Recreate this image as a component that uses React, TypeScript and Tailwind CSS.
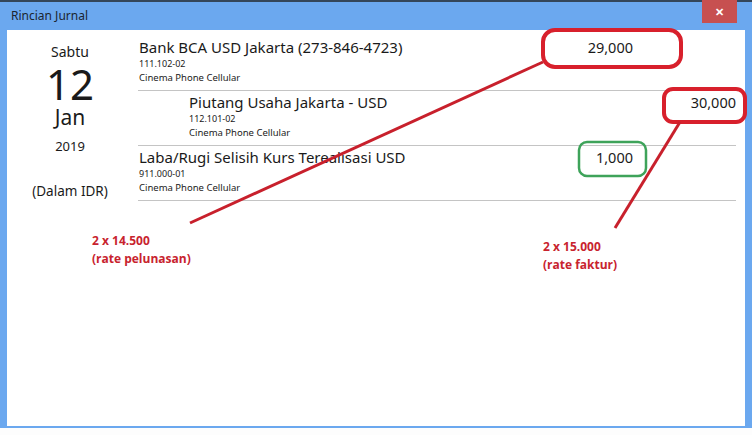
type Entry = {
  name: string;
  code: string;
  company: string;
  debit?: string;
  credit?: string;
  indent?: boolean;
};

const entries: Entry[] = [
  {
    name: 'Bank BCA USD Jakarta (273-846-4723)',
    code: '111.102-02',
    company: 'Cinema Phone Cellular',
    debit: '29,000',
  },
  {
    name: 'Piutang Usaha Jakarta - USD',
    code: '112.101-02',
    company: 'Cinema Phone Cellular',
    credit: '30,000',
    indent: true,
  },
  {
    name: 'Laba/Rugi Selisih Kurs Terealisasi USD',
    code: '911.000-01',
    company: 'Cinema Phone Cellular',
    debit: '1,000',
  },
];

const JournalRow = ({ entry }: { entry: Entry }) => (
  <div className="grid grid-cols-[1fr_100px_103px] border-b border-[#c4c4c4] pt-[1px] pb-[5px] text-[#1a1a1a]">
    <div className={entry.indent ? 'pl-[51px]' : 'pl-[1px]'}>
      <div className="h-[20px] text-[15px] leading-[20px] whitespace-nowrap">{entry.name}</div>
      <div className="h-[14px] text-[9px] leading-[14px]">{entry.code}</div>
      <div className="h-[14px] text-[9.5px] leading-[14px]">{entry.company}</div>
    </div>
    <div className="text-right text-[14.5px] leading-[20px]">{entry.debit}</div>
    <div className="text-right text-[14.5px] leading-[20px]">{entry.credit}</div>
  </div>
);

// red/green markup drawn over the journal
const Markup = () => (
  <svg className="absolute left-0 top-0 pointer-events-none" width="752" height="435" viewBox="0 0 752 435">
    <rect x="543" y="30" width="138" height="37" rx="12" fill="none" stroke="#d8202c" strokeWidth="4" />
    <rect x="664" y="89" width="81" height="33" rx="9" fill="none" stroke="#d8202c" strokeWidth="4" />
    <rect x="579" y="142" width="67" height="34" rx="8" fill="none" stroke="#3ea35a" strokeWidth="2.5" />
    <line x1="543" y1="62" x2="190" y2="223" stroke="#c8202c" strokeWidth="3" />
    <line x1="680" y1="122" x2="615" y2="228" stroke="#c8202c" strokeWidth="3" />
  </svg>
);

export default function App() {
  return (
    <div
      className="relative w-[752px] h-[435px] overflow-hidden bg-[#fdfdfd]"
      style={{ fontFamily: '"Noto Sans", "Open Sans", sans-serif' }}
    >
      <div className="h-[2px] bg-[#34465a]" />
      <div className="bg-[#6ba8ef]">
        <div className="flex h-[28px] items-start justify-between">
          <div className="pl-[11px] pt-[6px] text-[12px] leading-[16px] text-[#1b2530]">Rincian Jurnal</div>
          <div className="mr-[15px] -mt-[2px] flex h-[23px] w-[35px] items-center justify-center bg-[#c75050] text-[11px] font-bold leading-none text-white">
            ✕
          </div>
        </div>
        <div className="flex px-[7px] pb-[2px]">
          <div className="flex h-[396px] w-[738px] bg-white">
            <div className="flex w-[126px] flex-col items-center pt-[12px] text-[#1a1a1a]">
              <div className="text-[14px] leading-[20px]">Sabtu</div>
              <div className="text-[42px] leading-[44px]">12</div>
              <div className="text-[21px] leading-[22px]">Jan</div>
              <div className="text-[13px] leading-[18px] mt-[9px]">2019</div>
              <div className="text-[13.5px] leading-[20px] mt-[26px]">(Dalam IDR)</div>
            </div>
            <div className="flex-1 pl-[5px] pr-[9px] pt-[6px]">
              {entries.map((entry) => (
                <JournalRow key={entry.code} entry={entry} />
              ))}
            </div>
          </div>
        </div>
      </div>

      <div
        className="absolute left-[92px] top-[232px] text-[12px] font-bold leading-[18px] text-[#c8232e]"
        style={{ fontFamily: '"Open Sans", sans-serif' }}
      >
        <div>2 x 14.500</div>
        <div>(rate pelunasan)</div>
      </div>
      <div
        className="absolute left-[543px] top-[238px] text-[12px] font-bold leading-[18px] text-[#c8232e]"
        style={{ fontFamily: '"Open Sans", sans-serif' }}
      >
        <div>2 x 15.000</div>
        <div>(rate faktur)</div>
      </div>

      <Markup />
    </div>
  );
}
